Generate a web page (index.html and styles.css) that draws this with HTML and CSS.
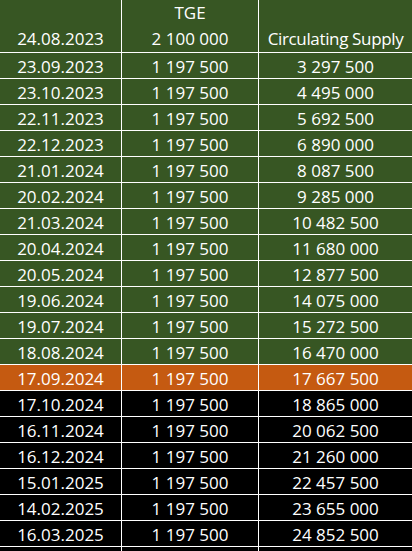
FILE: index.html
```html
<!DOCTYPE html>
<html>
<head>
<meta charset="utf-8">
<link rel="stylesheet" href="styles.css">
</head>
<body>
<div class="sheet">
  <div class="cell g head"><span></span><span>24.08.2023</span></div>
  <div class="cell g head"><span>TGE</span><span>2 100 000</span></div>
  <div class="cell g head"><span></span><span class="tight">Circulating Supply</span></div>

  <div class="cell g">23.09.2023</div><div class="cell g">1 197 500</div><div class="cell g">3 297 500</div>
  <div class="cell g">23.10.2023</div><div class="cell g">1 197 500</div><div class="cell g">4 495 000</div>
  <div class="cell g">22.11.2023</div><div class="cell g">1 197 500</div><div class="cell g">5 692 500</div>
  <div class="cell g">22.12.2023</div><div class="cell g">1 197 500</div><div class="cell g">6 890 000</div>
  <div class="cell g">21.01.2024</div><div class="cell g">1 197 500</div><div class="cell g">8 087 500</div>
  <div class="cell g">20.02.2024</div><div class="cell g">1 197 500</div><div class="cell g">9 285 000</div>
  <div class="cell g">21.03.2024</div><div class="cell g">1 197 500</div><div class="cell g">10 482 500</div>
  <div class="cell g">20.04.2024</div><div class="cell g">1 197 500</div><div class="cell g">11 680 000</div>
  <div class="cell g">20.05.2024</div><div class="cell g">1 197 500</div><div class="cell g">12 877 500</div>
  <div class="cell g">19.06.2024</div><div class="cell g">1 197 500</div><div class="cell g">14 075 000</div>
  <div class="cell g">19.07.2024</div><div class="cell g">1 197 500</div><div class="cell g">15 272 500</div>
  <div class="cell g">18.08.2024</div><div class="cell g">1 197 500</div><div class="cell g">16 470 000</div>
  <div class="cell o">17.09.2024</div><div class="cell o">1 197 500</div><div class="cell o">17 667 500</div>
  <div class="cell k">17.10.2024</div><div class="cell k">1 197 500</div><div class="cell k">18 865 000</div>
  <div class="cell k">16.11.2024</div><div class="cell k">1 197 500</div><div class="cell k">20 062 500</div>
  <div class="cell k">16.12.2024</div><div class="cell k">1 197 500</div><div class="cell k">21 260 000</div>
  <div class="cell k">15.01.2025</div><div class="cell k">1 197 500</div><div class="cell k">22 457 500</div>
  <div class="cell k">14.02.2025</div><div class="cell k">1 197 500</div><div class="cell k">23 655 000</div>
  <div class="cell k">16.03.2025</div><div class="cell k">1 197 500</div><div class="cell k">24 852 500</div>
  <div class="cell k"></div><div class="cell k"></div><div class="cell k"></div>
</div>
</body>
</html>
```
FILE: styles.css
```css
html, body {
  margin: 0;
  padding: 0;
  background: #000;
  overflow: hidden;
}
.sheet {
  display: grid;
  grid-template-columns: 121px 136px 153px;
  grid-template-rows: 52px;
  grid-auto-rows: 25px;
  gap: 1px;
  background: #ffffff;
  width: 412px;
  font-family: "Open Sans", sans-serif;
  font-size: 17px;
  color: #ffffff;
}
.cell {
  display: flex;
  align-items: center;
  justify-content: center;
  line-height: 25px;
  white-space: nowrap;
  padding-top: 1px;
  box-sizing: border-box;
}
.head {
  flex-direction: column;
  align-items: center;
  justify-content: flex-start;
  padding-top: 0;
}
.head span {
  display: block;
  height: 26px;
  line-height: 26px;
}
.head .tight {
  letter-spacing: -0.35px;
}
.g { background: #375623; }
.o { background: #c55a11; }
.k { background: #000000; }
```
